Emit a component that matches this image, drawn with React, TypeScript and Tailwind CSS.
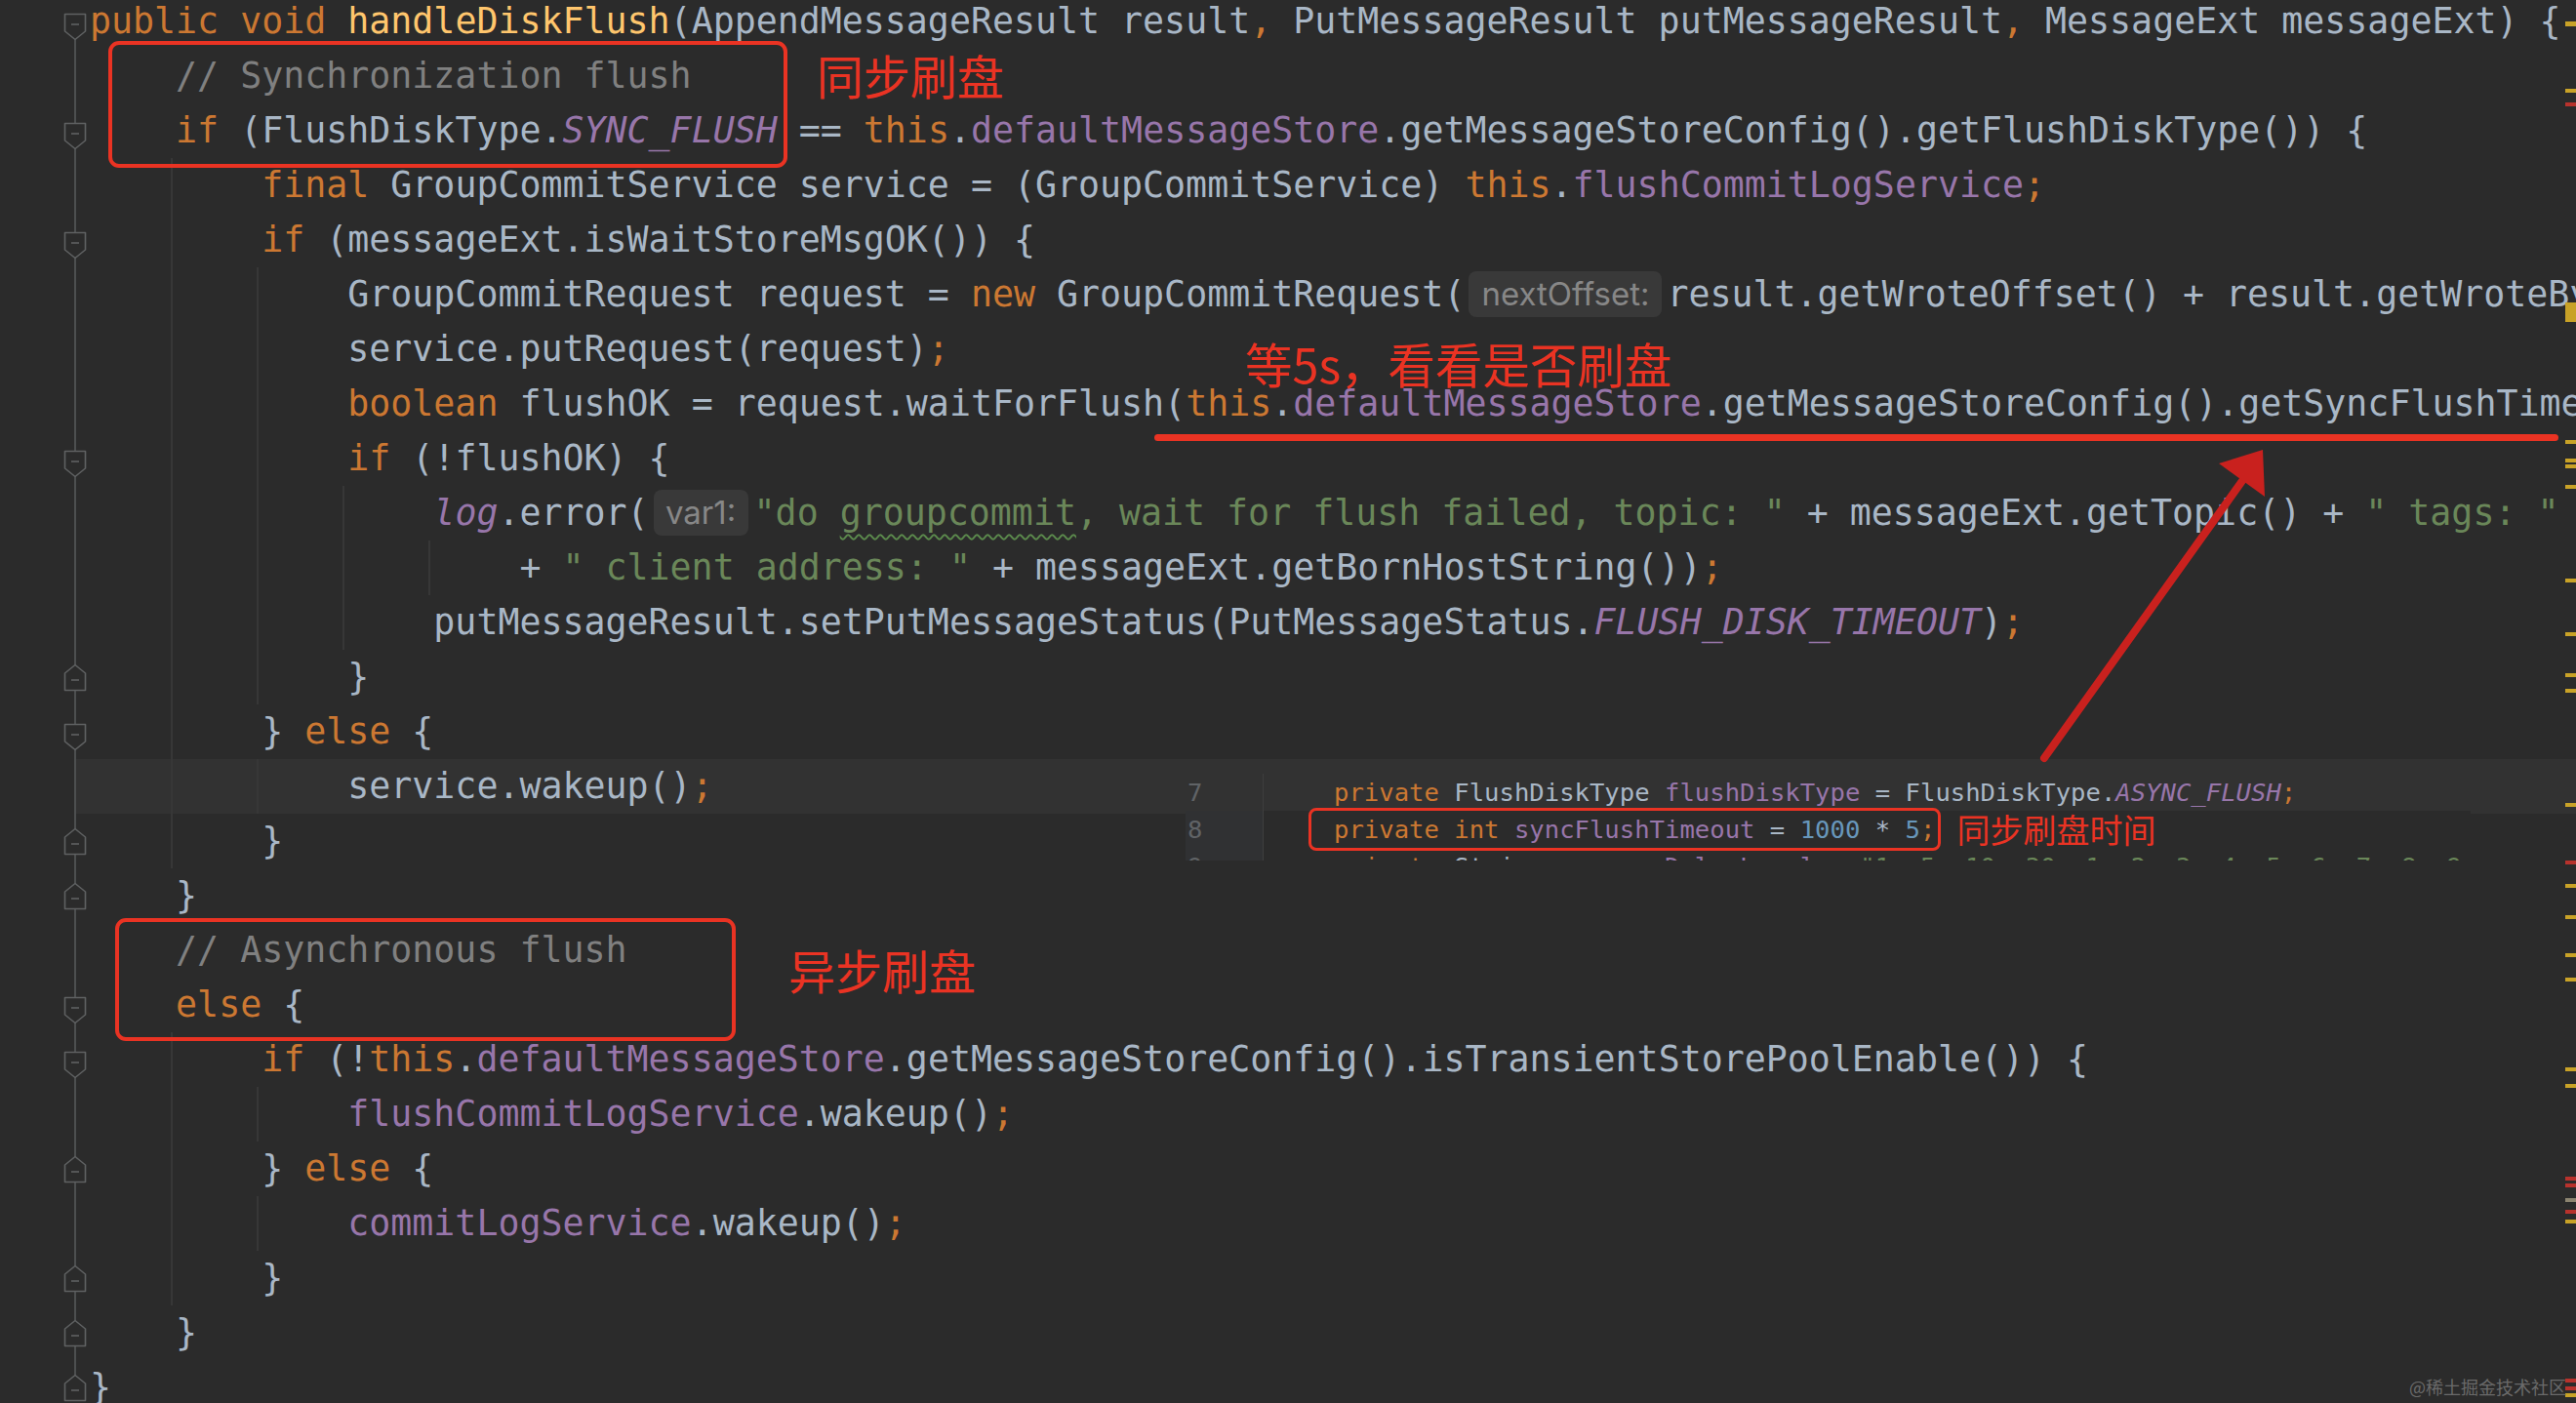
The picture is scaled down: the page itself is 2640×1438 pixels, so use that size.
import React from 'react';

const K = 'text-[#cc7832]';
const D = 'text-[#a9b7c6]';
const M = 'text-[#ffc66d]';
const F = 'text-[#9876aa]';
const FI = 'text-[#9876aa] italic';
const S = 'text-[#6a8759]';
const SW = 'text-[#6a8759] underline decoration-wavy decoration-[#5b8a4c] decoration-[2px] underline-offset-[9px]';
const C = 'text-[#808080]';
const N = 'text-[#6897bb]';
const CJK = "font-['Noto_Sans_CJK_SC',sans-serif] text-[#ea3323]";

type Seg = [string, string] | 'hintNext' | 'hintVar' | 'noteSync';
type Row = { t: Seg[]; fold?: 'd' | 'u'; g?: number[]; hl?: boolean };

const rows: Row[] = [
  { fold: 'd', t: [[K, 'public void '], [M, 'handleDiskFlush'], [D, '(AppendMessageResult result'], [K, ', '], [D, 'PutMessageResult putMessageResult'], [K, ', '], [D, 'MessageExt messageExt) {']] },
  { t: [[C, '    // Synchronization flush'], 'noteSync'] },
  { fold: 'd', t: [[K, '    if '], [D, '(FlushDiskType.'], [FI, 'SYNC_FLUSH'], [D, ' == '], [K, 'this'], [D, '.'], [F, 'defaultMessageStore'], [D, '.getMessageStoreConfig().getFlushDiskType()) {']] },
  { g: [1], t: [[K, '        final '], [D, 'GroupCommitService service = (GroupCommitService) '], [K, 'this'], [D, '.'], [F, 'flushCommitLogService'], [K, ';']] },
  { fold: 'd', g: [1], t: [[K, '        if '], [D, '(messageExt.isWaitStoreMsgOK()) {']] },
  { g: [1, 2], t: [[D, '            GroupCommitRequest request = '], [K, 'new '], [D, 'GroupCommitRequest('], 'hintNext', [D, 'result.getWroteOffset() + result.getWroteBytes())'], [K, ';']] },
  { g: [1, 2], t: [[D, '            service.putRequest(request)'], [K, ';']] },
  { g: [1, 2], t: [[K, '            boolean '], [D, 'flushOK = request.waitForFlush('], [K, 'this'], [D, '.'], [F, 'defaultMessageStore'], [D, '.getMessageStoreConfig().getSyncFlushTimeout())'], [K, ';']] },
  { fold: 'd', g: [1, 2], t: [[K, '            if '], [D, '(!flushOK) {']] },
  { g: [1, 2, 3], t: [[D, '                '], [FI, 'log'], [D, '.error('], 'hintVar', [S, '"do '], [SW, 'groupcommit'], [S, ', wait for flush failed, topic: "'], [D, ' + messageExt.getTopic() + '], [S, '" tags: "'], [D, ' + messageExt.getTags()']] },
  { g: [1, 2, 3, 4], t: [[D, '                    + '], [S, '" client address: "'], [D, ' + messageExt.getBornHostString())'], [K, ';']] },
  { g: [1, 2, 3], t: [[D, '                putMessageResult.setPutMessageStatus(PutMessageStatus.'], [FI, 'FLUSH_DISK_TIMEOUT'], [D, ')'], [K, ';']] },
  { fold: 'u', g: [1, 2], t: [[D, '            }']] },
  { fold: 'd', g: [1], t: [[D, '        } '], [K, 'else '], [D, '{']] },
  { hl: true, g: [1, 2], t: [[D, '            service.wakeup()'], [K, ';']] },
  { fold: 'u', g: [1], t: [[D, '        }']] },
  { fold: 'u', t: [[D, '    }']] },
  { t: [[C, '    // Asynchronous flush']] },
  { fold: 'd', t: [[K, '    else '], [D, '{']] },
  { fold: 'd', g: [1], t: [[K, '        if '], [D, '(!'], [K, 'this'], [D, '.'], [F, 'defaultMessageStore'], [D, '.getMessageStoreConfig().isTransientStorePoolEnable()) {']] },
  { g: [1, 2], t: [[F, '            flushCommitLogService'], [D, '.wakeup()'], [K, ';']] },
  { fold: 'u', g: [1], t: [[D, '        } '], [K, 'else '], [D, '{']] },
  { g: [1, 2], t: [[F, '            commitLogService'], [D, '.wakeup()'], [K, ';']] },
  { fold: 'u', g: [1], t: [[D, '        }']] },
  { fold: 'u', t: [[D, '    }']] },
  { fold: 'u', t: [[D, '}']] },
];

// gutter outline, fold markers, indent guides and caret-row highlight for one line
function RowDecor({ row, i }: { row: Row; i: number }) {
  const last = i === rows.length - 1;
  const stroke = '#5f6162';
  return (
    <svg className="col-start-1 row-start-1" width="2640" height="56" viewBox="0 0 2640 56">
      {row.hl && <rect x="77" y="0" width="2563" height="56" fill="#323232" />}
      {(row.g || []).map((g) => (
        <rect key={g} x={87 + 88 * g} y="0" width="2" height="56" fill="#373737" />
      ))}
      <rect x="76" y={i === 0 ? 40 : 0} width="2" height={i === 0 ? 16 : last ? 20 : 56} fill="#4d4f50" />
      {row.fold === 'd' && (
        <g transform="translate(65 19)">
          <path d="M1.5 1.5H22.5V19L12 27.5L1.5 19Z" fill="#2b2b2b" stroke={stroke} strokeWidth="1.6" strokeLinejoin="round" />
          <path d="M8 12H16" stroke={stroke} strokeWidth="1.6" />
        </g>
      )}
      {row.fold === 'u' && (
        <g transform="translate(65 14)">
          <path d="M1.5 27.5H22.5V10L12 1.5L1.5 10Z" fill="#2b2b2b" stroke={stroke} strokeWidth="1.6" strokeLinejoin="round" />
          <path d="M8 17H16" stroke={stroke} strokeWidth="1.6" />
        </g>
      )}
    </svg>
  );
}

function Hint({ kind }: { kind: 'hintNext' | 'hintVar' }) {
  const box =
    kind === 'hintNext'
      ? 'ml-[4px] mr-[5px] w-[198px]'
      : 'ml-[5px] mr-[6px] w-[97px]';
  return (
    <span className={`${box} mt-[4px] inline-block h-[47px] rounded-[8px] bg-[#393939] text-center align-top font-['Inter',sans-serif] text-[33px] leading-[47px] text-[#878787]`}>
      {kind === 'hintNext' ? 'nextOffset:' : 'var1:'}
    </span>
  );
}

function CodeRow({ row, i }: { row: Row; i: number }) {
  return (
    <div className="grid h-[56px] shrink-0">
      <RowDecor row={row} i={i} />
      <div className="col-start-1 row-start-1 whitespace-pre pl-[92px] leading-[56px]">
        {row.t.map((s, k) =>
          s === 'noteSync' ? (
            <span key={k} className={`${CJK} ml-[128px] align-[-7px] text-[48px] leading-none`}>
              同步刷盘
            </span>
          ) : typeof s === 'string' ? (
            <Hint key={k} kind={s} />
          ) : (
            <span key={k} className={s[0]}>
              {s[1]}
            </span>
          ),
        )}
      </div>
    </div>
  );
}

function Snippet() {
  return (
    <div className="absolute left-[1215px] top-[793px] flex h-[89px] w-[1317px] flex-col overflow-hidden bg-[#2b2b2b] font-['DejaVu_Sans_Mono',monospace] text-[25.6px] leading-[38px]">
      <div className="flex h-[38px] shrink-0 bg-[#323232]">
        <div className="w-[79px] shrink-0 pl-[2px] text-[#606366]">7</div>
        <div className="whitespace-pre border-l border-[#3e3e3e] pl-[72px]">
          <span className={K}>private </span>
          <span className={D}>FlushDiskType </span>
          <span className={F}>flushDiskType</span>
          <span className={D}> = FlushDiskType.</span>
          <span className={FI}>ASYNC_FLUSH</span>
          <span className={K}>;</span>
        </div>
      </div>
      <div className="flex h-[38px] shrink-0">
        <div className="w-[79px] shrink-0 bg-[#303133] pl-[2px] text-[#606366]">8</div>
        <div className="whitespace-pre border-l border-[#3e3e3e] pl-[46px]">
          <span className="rounded-[8px] border-[3px] border-[#ea3323] py-[4px] pl-[23px] pr-[3px]">
            <span className={K}>private int </span>
            <span className={F}>syncFlushTimeout</span>
            <span className={D}> = </span>
            <span className={N}>1000</span>
            <span className={D}> * </span>
            <span className={N}>5</span>
            <span className={K}>;</span>
          </span>
          <span className={`${CJK} ml-[16px] align-[-5px] text-[34px] leading-none`}>同步刷盘时间</span>
        </div>
      </div>
      <div className="flex h-[38px] shrink-0">
        <div className="w-[79px] shrink-0 bg-[#303133] pl-[2px] text-[#606366]">9</div>
        <div className="whitespace-pre border-l border-[#3e3e3e] pl-[72px]">
          <span className={K}>private </span>
          <span className={D}>String </span>
          <span className={F}>messageDelayLevel</span>
          <span className={D}> = </span>
          <span className={S}>"1s 5s 10s 30s 1m 2m 3m 4m 5m 6m 7m 8m 9m 10m 20m 30m 1h 2h"</span>
          <span className={K}>;</span>
        </div>
      </div>
    </div>
  );
}

// error stripe marks on the right edge: [y, height, colour]
const marks: [number, number, string][] = [
  [22, 5, '#c9a227'],
  [91, 4, '#c9a227'],
  [105, 4, '#b8322c'],
  [310, 20, '#c9a227'],
  [451, 4, '#c9a227'],
  [470, 4, '#c9a227'],
  [476, 4, '#c9a227'],
  [497, 4, '#c9a227'],
  [593, 4, '#c9a227'],
  [648, 4, '#c9a227'],
  [690, 4, '#c9a227'],
  [706, 4, '#c9a227'],
  [823, 4, '#c9a227'],
  [882, 4, '#b8322c'],
  [906, 4, '#c9a227'],
  [938, 4, '#c9a227'],
  [977, 4, '#c9a227'],
  [1002, 4, '#c9a227'],
  [1094, 4, '#c9a227'],
  [1111, 4, '#c9a227'],
  [1206, 4, '#b8322c'],
  [1213, 4, '#b8322c'],
  [1228, 4, '#8c8470'],
  [1240, 4, '#b8322c'],
  [1250, 4, '#c9a227'],
  [1413, 4, '#b8322c'],
  [1421, 4, '#b8322c'],
  [1428, 4, '#c9a227'],
];

export default function App() {
  return (
    <div className="relative h-[1438px] w-[2640px] overflow-hidden bg-[#2b2b2b] font-['DejaVu_Sans_Mono',monospace] text-[36.6px]">
      <div className="-mt-[6px] flex flex-col">
        {rows.map((r, i) => (
          <CodeRow key={i} row={r} i={i} />
        ))}
      </div>

      <Snippet />

      {/* hand-drawn markup layered over the screenshot */}
      <svg className="pointer-events-none absolute inset-0" width="2640" height="1438" viewBox="0 0 2640 1438">
        {marks.map(([y, h, c], i) => (
          <rect key={i} x="2629" y={y} width="11" height={h} fill={c} />
        ))}
        <rect x="113" y="44" width="692" height="126" rx="9" fill="none" stroke="#ea3323" strokeWidth="4" />
        <rect x="120" y="943" width="632" height="122" rx="9" fill="none" stroke="#ea3323" strokeWidth="4" />
        <rect x="1183" y="445" width="1439" height="7" rx="3.5" fill="#ea3323" />
        <line x1="2095" y1="777" x2="2300" y2="490" stroke="#c9211e" strokeWidth="8" strokeLinecap="round" />
        <polygon points="2319,461 2274,475 2321,509" fill="#c9211e" />
      </svg>

      <div className={`${CJK} absolute left-[1276px] top-[345px] text-[48.5px] leading-[54px]`}>等5s，看看是否刷盘</div>
      <div className={`${CJK} absolute left-[808px] top-[966px] text-[48px] leading-[54px]`}>异步刷盘</div>

      <div className="absolute bottom-[4px] right-[10px] font-['Noto_Sans_CJK_SC',sans-serif] text-[18px] leading-[26px] text-[#6a6a6a]">
        @稀土掘金技术社区
      </div>
    </div>
  );
}
